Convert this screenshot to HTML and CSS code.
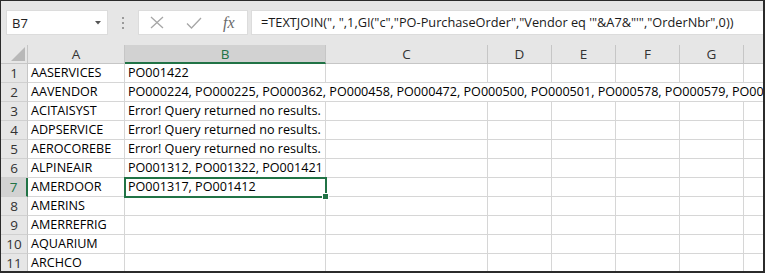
FILE: index.html
```html
<!DOCTYPE html>
<html lang="en">
<head>
    <meta charset="UTF-8">
    <title>Book1 - Excel</title>
    <link rel="stylesheet" href="styles.css">
</head>
<body>

<div class="frame">
    <div class="toolbar">
        <div class="namebox">
            <span>B7</span>
            <svg class="caret" width="6" height="4" viewBox="0 0 6 4"><path d="M0 0h6L3 3.5z" fill="#555"/></svg>
        </div>
        <div class="grip"><i></i><i></i><i></i></div>
        <div class="fxbox">
            <svg width="14" height="13" viewBox="0 0 14 13"><path d="M1 1l12 11M13 1L1 12" stroke="#a6a6a6" stroke-width="1.3" fill="none"/></svg>
            <svg width="16" height="12" viewBox="0 0 16 12"><path d="M1 6.5l4.5 4.5L15 1" stroke="#a6a6a6" stroke-width="1.3" fill="none"/></svg>
            <span class="fx">fx</span>
        </div>
        <div class="formula">=TEXTJOIN(", ",1,GI("c","PO-PurchaseOrder","Vendor eq '"&amp;A7&amp;"'","OrderNbr",0))</div>
    </div>

    <div class="sheet">
        <div class="corner"><span class="tri"></span></div>
        <div class="colhead">A</div>
        <div class="colhead sel">B</div>
        <div class="colhead">C</div>
        <div class="colhead">D</div>
        <div class="colhead">E</div>
        <div class="colhead">F</div>
        <div class="colhead">G</div>
        <div class="colhead"></div>

        <div class="rowhead">1</div><div class="cell">AASERVICES</div><div class="cell">PO001422</div><div class="cell"></div><div class="cell"></div><div class="cell"></div><div class="cell"></div><div class="cell"></div><div class="cell"></div>
        <div class="rowhead">2</div><div class="cell">AAVENDOR</div><div class="cell spill">PO000224, PO000225, PO000362, PO000458, PO000472, PO000500, PO000501, PO000578, PO000579, PO000580</div>
        <div class="rowhead">3</div><div class="cell">ACITAISYST</div><div class="cell">Error! Query returned no results.</div><div class="cell"></div><div class="cell"></div><div class="cell"></div><div class="cell"></div><div class="cell"></div><div class="cell"></div>
        <div class="rowhead">4</div><div class="cell">ADPSERVICE</div><div class="cell">Error! Query returned no results.</div><div class="cell"></div><div class="cell"></div><div class="cell"></div><div class="cell"></div><div class="cell"></div><div class="cell"></div>
        <div class="rowhead">5</div><div class="cell">AEROCOREBE</div><div class="cell">Error! Query returned no results.</div><div class="cell"></div><div class="cell"></div><div class="cell"></div><div class="cell"></div><div class="cell"></div><div class="cell"></div>
        <div class="rowhead">6</div><div class="cell">ALPINEAIR</div><div class="cell">PO001312, PO001322, PO001421</div><div class="cell"></div><div class="cell"></div><div class="cell"></div><div class="cell"></div><div class="cell"></div><div class="cell"></div>
        <div class="rowhead sel">7</div><div class="cell">AMERDOOR</div><div class="cell active">PO001317, PO001412<span class="handle"></span></div><div class="cell"></div><div class="cell"></div><div class="cell"></div><div class="cell"></div><div class="cell"></div><div class="cell"></div>
        <div class="rowhead">8</div><div class="cell">AMERINS</div><div class="cell"></div><div class="cell"></div><div class="cell"></div><div class="cell"></div><div class="cell"></div><div class="cell"></div><div class="cell"></div>
        <div class="rowhead">9</div><div class="cell">AMERREFRIG</div><div class="cell"></div><div class="cell"></div><div class="cell"></div><div class="cell"></div><div class="cell"></div><div class="cell"></div><div class="cell"></div>
        <div class="rowhead">10</div><div class="cell">AQUARIUM</div><div class="cell"></div><div class="cell"></div><div class="cell"></div><div class="cell"></div><div class="cell"></div><div class="cell"></div><div class="cell"></div>
        <div class="rowhead">11</div><div class="cell">ARCHCO</div><div class="cell"></div><div class="cell"></div><div class="cell"></div><div class="cell"></div><div class="cell"></div><div class="cell"></div><div class="cell"></div>
    </div>
</div>

</body>
</html>
```

FILE: styles.css
```css
body {
    margin: 0;
    font-family: "Open Sans", "Noto Sans", sans-serif;
    background-color: #fff;
}
.frame {
    width: 765px;
    height: 273px;
    box-sizing: border-box;
    border-top: 1px solid #2b2b2b;
    border-left: 1px solid #2b2b2b;
    border-right: 2px solid #2b2b2b;
    border-bottom: 2px solid #2b2b2b;
    overflow: hidden;
    background-color: #fff;
}
.toolbar {
    height: 44px;
    background-color: #e6e6e6;
    display: flex;
    align-items: flex-start;
    padding: 9px 0 0 5px;
    box-sizing: border-box;
}
.namebox {
    width: 102px;
    height: 25px;
    box-sizing: border-box;
    background-color: #fff;
    border: 1px solid #dcdcdc;
    display: flex;
    align-items: center;
    justify-content: space-between;
    padding: 0 6px 0 5px;
    font-size: 13px;
    color: #222;
}
.grip {
    width: 30px;
    height: 25px;
    display: flex;
    flex-direction: column;
    align-items: center;
    justify-content: center;
    gap: 3px;
}
.grip i {
    width: 2px;
    height: 2px;
    background-color: #9a9a9a;
}
.fxbox {
    width: 110px;
    height: 25px;
    box-sizing: border-box;
    background-color: #fff;
    border: 1px solid #dcdcdc;
    display: flex;
    align-items: center;
    padding-left: 11px;
    gap: 22px;
}
.fx {
    font-family: "Liberation Serif", serif;
    font-style: italic;
    font-size: 16px;
    color: #6a6a6a;
    margin-left: -1px;
}
.formula {
    flex: 1;
    height: 25px;
    margin-left: 3px;
    box-sizing: border-box;
    background-color: #fff;
    border: 1px solid #dcdcdc;
    border-right: none;
    padding-left: 9px;
    font-size: 12.75px;
    line-height: 23px;
    color: #1a1a1a;
    white-space: nowrap;
    overflow: hidden;
}
.sheet {
    display: grid;
    grid-template-columns: 27px 97px 201px 162px 64px 64px 64px 64px 20px;
    grid-auto-rows: 19px;
    font-size: 12.6px;
    color: #000;
}
.corner, .colhead, .rowhead, .cell {
    box-sizing: border-box;
    border-right: 1px solid #d6d6d6;
    border-bottom: 1px solid #d6d6d6;
    white-space: nowrap;
    overflow: hidden;
}
.corner {
    background-color: #e6e6e6;
    border-right-color: #c6c6c6;
    border-bottom-color: #c6c6c6;
    display: flex;
    align-items: flex-end;
    justify-content: flex-end;
    padding: 0 2px 2px 0;
}
.tri {
    width: 0;
    height: 0;
    border-left: 14px solid transparent;
    border-bottom: 14px solid #b8b8b8;
}
.colhead {
    background-color: #e6e6e6;
    border-right-color: #c6c6c6;
    border-bottom-color: #c6c6c6;
    text-align: center;
    font-size: 13.5px;
    line-height: 18px;
    color: #333;
}
.colhead.sel {
    background-color: #d2d2d2;
    color: #217346;
    border-bottom: 2px solid #217346;
}
.rowhead {
    background-color: #e6e6e6;
    border-right-color: #c6c6c6;
    border-bottom-color: #d0d0d0;
    text-align: center;
    font-size: 13.5px;
    line-height: 18px;
    color: #333;
}
.rowhead.sel {
    background-color: #d2d2d2;
    color: #217346;
    border-right: 2px solid #217346;
}
.cell {
    padding-left: 3px;
    line-height: 18px;
}
.cell.spill {
    grid-column: 3 / 10;
    border-right: none;
}
.cell.active {
    position: relative;
    overflow: visible;
    outline: 2px solid #217346;
    outline-offset: -1px;
}
.handle {
    position: absolute;
    right: -4px;
    bottom: -4px;
    width: 5px;
    height: 5px;
    background-color: #217346;
    border: 1px solid #fff;
}
```
